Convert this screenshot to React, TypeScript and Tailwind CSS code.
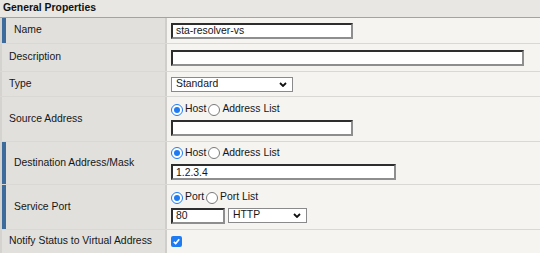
import React from "react";

function Radio({ checked }: { checked: boolean }) {
  return checked ? (
    <span className="inline-flex w-[12px] h-[12px] shrink-0 items-center justify-center rounded-full border-[1.5px] border-[#1f7bf2] bg-white">
      <span className="w-[6px] h-[6px] rounded-full bg-[#1f7bf2]" />
    </span>
  ) : (
    <span className="inline-block w-[12px] h-[12px] shrink-0 rounded-full border border-[#7a7a7a] bg-white" />
  );
}

function TextBox({ value, w }: { value: string; w: string }) {
  return (
    <input
      readOnly
      value={value}
      className={`${w} h-[16px] bg-white border-2 border-t-[#2e2e2e] border-l-[#2e2e2e] border-r-[#8e8e8e] border-b-[#8e8e8e] pl-[3px] text-[10.4px] text-[#161616] outline-none font-['Liberation_Sans',Arial,sans-serif]`}
    />
  );
}

function Select({ value, w }: { value: string; w: string }) {
  return (
    <div className={`${w} h-[15px] bg-white border border-[#8a8a8a] flex items-center justify-between pl-[4px] pr-[4px]`}>
      <span>{value}</span>
      <svg width="8" height="5" viewBox="0 0 8 5" className="mr-[1px]">
        <polyline points="1,1 4,4 7,1" fill="none" stroke="#111" strokeWidth="1.8" />
      </svg>
    </div>
  );
}

function RadioLine({ a, b }: { a: string; b: string }) {
  return (
    <div className="flex items-center h-[14px]">
      <Radio checked />
      <span className="ml-[2px] mr-[2px]">{a}</span>
      <Radio checked={false} />
      <span className="ml-[2px]">{b}</span>
    </div>
  );
}

function Row({
  label,
  req,
  h,
  children,
  last,
}: {
  label: string;
  req?: boolean;
  h: string;
  children: React.ReactNode;
  last?: boolean;
}) {
  return (
    <div className={`flex ${h} ${last ? "" : "border-b border-[#d9d8d4]"}`}>
      <div className="w-[167px] shrink-0 flex bg-[#e1e0dc] border-r-2 border-[#cfcecb] border-l-2 border-l-[#d4d3cf]">
        {req ? <div className="w-[4px] bg-[#3d6c9c]" /> : null}
        <div className={`flex items-center ${req ? "pl-[8px]" : "pl-[7px]"}`}>{label}</div>
      </div>
      <div className="flex-1 flex flex-col justify-center pl-[4px] bg-[#f5f4f1]">{children}</div>
    </div>
  );
}

export default function App() {
  return (
    <div className="w-[540px] h-[253px] overflow-hidden bg-[#f5f4f1] text-[10.4px] leading-none text-[#161616] font-['Liberation_Sans',Arial,sans-serif]">
      <div className="h-[18px] bg-[#e8e7e3] border-b border-[#a4a3a0] flex items-center pl-[3px] font-bold text-[#111]">
        General Properties
      </div>
      <Row label="Name" req h="h-[26px]">
        <TextBox value="sta-resolver-vs" w="w-[182px]" />
      </Row>
      <Row label="Description" h="h-[28px]">
        <TextBox value="" w="w-[353px]" />
      </Row>
      <Row label="Type" h="h-[25px]">
        <Select value="Standard" w="w-[122px]" />
      </Row>
      <Row label="Source Address" h="h-[45px]">
        <RadioLine a="Host" b="Address List" />
        <div className="mt-[3px]">
          <TextBox value="" w="w-[182px]" />
        </div>
      </Row>
      <Row label="Destination Address/Mask" req h="h-[43px]">
        <RadioLine a="Host" b="Address List" />
        <div className="mt-[4px]">
          <TextBox value="1.2.3.4" w="w-[225px]" />
        </div>
      </Row>
      <Row label="Service Port" req h="h-[45px]">
        <RadioLine a="Port" b="Port List" />
        <div className="mt-[3px] flex items-center gap-[3px]">
          <TextBox value="80" w="w-[54px]" />
          <Select value="HTTP" w="w-[79px]" />
        </div>
      </Row>
      <Row label="Notify Status to Virtual Address" h="h-[23px]" last>
        <div className="flex">
          <span className="inline-flex w-[11px] h-[11px] rounded-[2px] bg-[#1f7bf2] items-center justify-center">
            <svg width="9" height="9" viewBox="0 0 9 9">
              <polyline points="1.8,4.8 3.7,6.6 7.2,2.2" fill="none" stroke="#fff" strokeWidth="1.7" />
            </svg>
          </span>
        </div>
      </Row>
    </div>
  );
}
